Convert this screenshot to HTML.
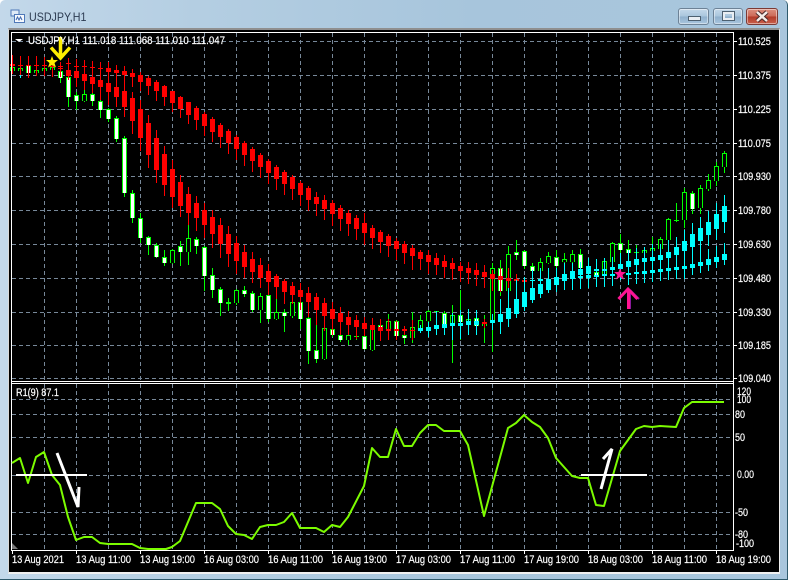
<!DOCTYPE html>
<html><head><meta charset="utf-8"><title>USDJPY,H1</title>
<style>
html,body{margin:0;padding:0;background:#fff;width:790px;height:581px;overflow:hidden}
#win{position:absolute;left:0;top:0;width:788px;height:580px;background:linear-gradient(90deg,#c3d8ea 0,#b4cee2 25%,#a7c5dc 60%,#a9c6dd 100%);border-right:1px solid #2f5a6c;border-bottom:1px solid #2f5a6c;border-radius:5px 5px 0 0;box-sizing:border-box}
#client{position:absolute;left:8px;top:28px;width:772px;height:546px;background:#000;border:1px solid;border-color:#8f8f8f #f0f0f0 #f0f0f0 #d8d8d8;border-top-width:2px;border-bottom-width:2px;box-sizing:border-box}
#t{position:absolute;left:29px;top:9px;font:12px "Liberation Sans",sans-serif;color:#2b3a50;line-height:16px;transform:scaleX(.89);transform-origin:0 0}
.b{position:absolute;top:8px;height:17px;box-sizing:border-box;border:1px solid #6d8296;border-radius:3px;box-shadow:inset 0 0 0 1px rgba(255,255,255,.45);background:linear-gradient(#c4d9ea 0,#aac6dd 48%,#8fb0cd 52%,#a9c6de 100%)}
#svg{position:absolute;left:0;top:0}
text{font-family:"Liberation Sans",sans-serif;fill:#fff;stroke:#fff;stroke-width:.2px;font-size:11px}
</style></head><body>
<div id="win">
<div id="t">USDJPY,H1</div>
<svg style="position:absolute;left:10px;top:9px" width="15" height="15" viewBox="0 0 15 15"><rect x="1" y="1" width="8" height="6" fill="#dfeaf6" stroke="#4f78b8"/><rect x="4.500" y="5.500" width="10" height="8" fill="#f6f9fd" stroke="#4f78b8"/><path d="M6 11l1.500-3 1.500 3 1.500-3 1.500 3" fill="none" stroke="#3f68b0"/></svg>
<div class="b" style="left:678px;width:31px"><div style="position:absolute;left:9px;top:7px;width:11px;height:3px;background:#e9eef3;border:1px solid #4d6070"></div></div>
<div class="b" style="left:713px;width:30px"><div style="position:absolute;left:9px;top:3px;width:7px;height:4px;border:2px solid #e9eef3;outline:1px solid #4d6070"></div></div>
<div class="b" style="left:746px;width:32px;border-color:#7c3a35;background:linear-gradient(#dc8f7f 0,#cc6a58 48%,#b23a28 52%,#c9604c 100%)"><svg width="30" height="15" style="position:absolute;left:0;top:0"><path d="M10 3l10 9M20 3l-10 9" stroke="#4a2a2a" stroke-width="4.500"/><path d="M10 3l10 9M20 3l-10 9" stroke="#f4ece8" stroke-width="2.500"/></svg></div>
<div id="client"></div>
</div>
<svg id="svg" width="790" height="581" viewBox="0 0 790 581">
<g stroke="#778899" stroke-width="1" stroke-dasharray="4 3" shape-rendering="crispEdges" fill="none">
<path d="M12 41.500H732M12 75.500H732M12 109.500H732M12 143.500H732M12 176.500H732M12 210.500H732M12 244.500H732M12 278.500H732M12 312.500H732M12 345.500H732M12 378.500H732"/>
<path d="M12 399.500H732M12 414.500H732M12 437.500H732M12 475.500H732M12 512.500H732M12 534.500H732"/>
<path d="M44.500 33V381M76.500 33V381M108.500 33V381M140.500 33V381M172.500 33V381M204.500 33V381M236.500 33V381M268.500 33V381M300.500 33V381M332.500 33V381M364.500 33V381M396.500 33V381M428.500 33V381M460.500 33V381M492.500 33V381M524.500 33V381M556.500 33V381M588.500 33V381M620.500 33V381M652.500 33V381M684.500 33V381M716.500 33V381"/>
<path d="M44.500 384V550M76.500 384V550M108.500 384V550M140.500 384V550M172.500 384V550M204.500 384V550M236.500 384V550M268.500 384V550M300.500 384V550M332.500 384V550M364.500 384V550M396.500 384V550M428.500 384V550M460.500 384V550M492.500 384V550M524.500 384V550M556.500 384V550M588.500 384V550M620.500 384V550M652.500 384V550M684.500 384V550M716.500 384V550"/>
</g>
<g id="c" shape-rendering="crispEdges"></g>
<g stroke="#fff" fill="none" shape-rendering="crispEdges" stroke-width="1">
<path d="M11.500 32.500H733.500V550.500H11.500ZM11.500 381.500H733.500M11.500 383.500H733.500"/>
<path d="M733 41.500h4M733 75.500h4M733 109.500h4M733 143.500h4M733 176.500h4M733 210.500h4M733 244.500h4M733 278.500h4M733 312.500h4M733 345.500h4M733 378.500h4"/>
<path d="M12.500 550v4M76.500 550v4M140.500 550v4M204.500 550v4M268.500 550v4M332.500 550v4M396.500 550v4M460.500 550v4M524.500 550v4M588.500 550v4M652.500 550v4M716.500 550v4"/>
</g>
<path d="M12 549v-6l6 6z" fill="#777"/>
<polyline fill="none" stroke="#7cfc00" stroke-width="2" stroke-linejoin="round" points="12,463 20,458 28,483 36,457 44,452 52,475 60,485 68,517 76,540 84,537 92,537 100,543 108,544 132,544 140,548 148,549 166,549 172,547 180,541 196,503 212,503 220,509 228,526 236,534 244,535 252,539 260,527 268,525 276,525 284,522 292,513 300,528 316,528 324,532 332,525 340,527 348,517 364,486 372,448 380,457 388,457 396,429 404,446 412,446 420,433 428,425 436,425 444,431 460,431 468,445 484,516 508,428 516,423 524,415 532,422 540,427 548,438 556,458 572,476 580,478 588,478 596,505 604,506 620,451 636,429 644,426 652,427 660,426 676,427 684,408 692,402 724,402"/>
<g fill="none" stroke="#fff">
<path d="M16 475H87M581 475H647" stroke-width="2"/>
<path d="M57 453L78 507 79 487" stroke-width="3"/>
<path d="M601 489L612 449 603 459" stroke-width="3"/>
</g>
<path d="M60.500 37V57M51 47.500L60.500 58 70 47.500" fill="none" stroke="#ffee00" stroke-width="3.500"/>
<polygon fill="#ffee00" points="52,56 53.500,60 58,60 54.500,63 56,67.500 52,65 48,67.500 49.500,63 46,60 50.500,60"/>
<polygon fill="#ff1493" points="620,268 621.500,272 626,272 622.500,275 624,279.500 620,277 616,279.500 617.500,275 614,272 618.500,272"/>
<path d="M630 290L639 299M630 292V309" fill="none" stroke="#8b1a9b" stroke-width="2"/>
<path d="M628.500 290V309M618.500 299L628 289 637.500 299" fill="none" stroke="#ff1493" stroke-width="3"/>
<path d="M15 39h8l-4 3z" fill="#fff"/>
<text x="28" y="44" textLength="197" lengthAdjust="spacingAndGlyphs">USDJPY,H1  111.018 111.068 111.010 111.047</text>
<text x="16" y="396" textLength="43" lengthAdjust="spacingAndGlyphs">R1(9) 87.1</text>
<g>
<text x="738" y="45" textLength="33" lengthAdjust="spacingAndGlyphs">110.525</text>
<text x="738" y="79" textLength="33" lengthAdjust="spacingAndGlyphs">110.375</text>
<text x="738" y="113" textLength="33" lengthAdjust="spacingAndGlyphs">110.225</text>
<text x="738" y="147" textLength="33" lengthAdjust="spacingAndGlyphs">110.075</text>
<text x="738" y="180" textLength="33" lengthAdjust="spacingAndGlyphs">109.930</text>
<text x="738" y="214" textLength="33" lengthAdjust="spacingAndGlyphs">109.780</text>
<text x="738" y="248" textLength="33" lengthAdjust="spacingAndGlyphs">109.630</text>
<text x="738" y="282" textLength="33" lengthAdjust="spacingAndGlyphs">109.480</text>
<text x="738" y="316" textLength="33" lengthAdjust="spacingAndGlyphs">109.330</text>
<text x="738" y="349" textLength="33" lengthAdjust="spacingAndGlyphs">109.185</text>
<text x="738" y="382" textLength="33" lengthAdjust="spacingAndGlyphs">109.040</text>
<text x="737" y="395" textLength="14" lengthAdjust="spacingAndGlyphs">120</text>
<text x="737" y="403" textLength="14" lengthAdjust="spacingAndGlyphs">100</text>
<text x="735" y="418" textLength="10" lengthAdjust="spacingAndGlyphs">80</text>
<text x="735" y="441" textLength="10" lengthAdjust="spacingAndGlyphs">50</text>
<text x="737" y="478" textLength="17" lengthAdjust="spacingAndGlyphs">0.00</text>
<text x="735" y="516" textLength="13" lengthAdjust="spacingAndGlyphs">-50</text>
<text x="735" y="538" textLength="13" lengthAdjust="spacingAndGlyphs">-80</text>
<text x="736" y="547" textLength="18" lengthAdjust="spacingAndGlyphs">-100</text>
</g>
<g>
<text x="12" y="563" textLength="52" lengthAdjust="spacingAndGlyphs">13 Aug 2021</text>
<text x="76" y="563" textLength="55" lengthAdjust="spacingAndGlyphs">13 Aug 11:00</text>
<text x="140" y="563" textLength="55" lengthAdjust="spacingAndGlyphs">13 Aug 19:00</text>
<text x="204" y="563" textLength="55" lengthAdjust="spacingAndGlyphs">16 Aug 03:00</text>
<text x="268" y="563" textLength="55" lengthAdjust="spacingAndGlyphs">16 Aug 11:00</text>
<text x="332" y="563" textLength="55" lengthAdjust="spacingAndGlyphs">16 Aug 19:00</text>
<text x="396" y="563" textLength="55" lengthAdjust="spacingAndGlyphs">17 Aug 03:00</text>
<text x="460" y="563" textLength="55" lengthAdjust="spacingAndGlyphs">17 Aug 11:00</text>
<text x="524" y="563" textLength="55" lengthAdjust="spacingAndGlyphs">17 Aug 19:00</text>
<text x="588" y="563" textLength="55" lengthAdjust="spacingAndGlyphs">18 Aug 03:00</text>
<text x="652" y="563" textLength="55" lengthAdjust="spacingAndGlyphs">18 Aug 11:00</text>
<text x="716" y="563" textLength="55" lengthAdjust="spacingAndGlyphs">18 Aug 19:00</text>
</g>
</svg>
<script>
var P="12,60,67,71,74,b;20,62,68,71,74,b;28,60,65,73,77,w;36,62,70,73,76,b;44,66,68,71,72,b;52,64,67,70,72,b;60,64,71,78,83,w;68,70,77,97,107,w;76,92,95,101,110,w;84,89,94,101,102,b;92,92,94,101,106,w;100,100,101,110,118,w;108,108,109,119,122,w;116,116,118,139,142,w;124,136,138,193,197,w;132,190,193,218,223,w;140,213,218,238,243,w;148,236,237,245,255,w;156,243,245,257,258,w;164,250,257,263,266,w;172,249,250,263,264,b;180,241,246,252,266,w;188,225,238,252,265,b;196,237,239,246,254,w;204,246,247,276,291,w;212,268,275,290,298,w;220,287,289,303,316,w;228,298,302,304,311,g;236,289,290,303,305,b;244,286,290,294,297,w;252,291,293,310,312,w;260,293,296,310,323,b;268,294,295,319,322,w;276,299,312,319,320,b;284,309,312,316,332,w;292,290,302,316,318,b;300,300,302,319,329,w;308,316,318,351,364,w;316,325,350,359,363,w;324,326,328,359,360,b;332,320,329,335,337,w;340,333,335,340,342,w;348,328,335,340,345,b;356,330,336,337,340,g;364,335,336,349,350,w;372,328,329,350,351,b;380,320,325,330,335,w;388,314,321,330,331,b;396,320,321,336,340,w;404,327,335,338,344,w;412,312,327,338,343,b;420,315,320,330,332,b;428,310,311,321,323,b;436,311,311,312,320,g;444,311,313,324,325,w;452,305,315,324,363,b;460,290,315,322,340,w;468,315,319,325,328,b;476,312,318,326,330,w;484,315,322,326,343,b;492,263,268,320,352,b;500,260,268,291,296,w;508,246,254,291,293,b;516,240,252,255,260,w;524,250,251,266,269,w;532,263,266,271,275,w;540,258,262,271,272,b;548,252,256,263,264,b;556,250,257,266,269,w;564,253,259,262,264,b;572,250,254,262,263,b;580,249,254,268,270,w;588,262,266,274,277,w;596,270,272,277,278,w;604,261,261,276,277,b;612,242,243,262,263,b;620,234,243,250,260,w;628,240,249,253,260,w;636,245,252,253,265,g;644,250,250,253,265,b;652,237,248,251,260,b;660,237,239,249,255,b;668,218,219,240,245,b;676,203,220,221,222,g;684,188,192,220,228,b;692,191,193,209,214,w;700,185,188,208,214,b;708,174,180,189,191,b;716,162,166,181,186,b;724,151,153,167,173,b";
var S="12,55,64,65,74;20,56,65,66,75;28,56,65,66,78;36,56,65,66,76;44,57,65,66,76;52,59,66,67,77;60,62,66,67,76;68,58,63,64,77;76,60,66,67,77;84,60,66,67,75;92,61,67,68,77;100,62,68,69,78;108,62,68,72,82;116,65,70,73,84;124,66,71,75,85;132,69,73,77,87;140,72,75,82,91;148,76,78,86,95;156,80,82,91,101;164,85,86,97,106;172,91,91,103,112;180,96,97,109,118;188,102,102,115,124;196,106,108,120,130;204,112,114,126,136;212,117,119,132,142;220,123,125,137,148;228,129,131,143,154;236,135,137,149,160;244,141,143,155,166;252,147,149,161,172;260,153,155,167,178;268,159,161,173,184;276,165,167,179,190;284,170,172,184,195;292,175,177,189,200;300,181,183,195,206;308,186,188,200,211;316,192,197,204,216;324,195,200,209,220;332,200,203,214,226;340,205,208,219,231;348,210,213,224,236;356,215,218,229,240;364,213,223,233,245;372,225,228,238,249;380,230,232,242,253;388,234,236,246,257;396,238,241,249,260;404,241,244,253,264;412,245,248,256,270;420,250,252,259,270;428,250,255,262,274;436,253,258,265,275;444,255,261,267,278;452,258,263,269,280;460,262,266,271,282;468,262,268,273,284;476,263,270,275,286;484,265,272,277,288;492,270,274,279,291;500,268,276,280,292;508,268,278,281,292;516,274,279,281,288;524,277,280,282,290";
var S2="532,270,280,281,295;540,268,279,281,295;548,268,279,281,293;556,268,278,280,292;564,267,277,279,290;572,267,277,278,288;580,266,276,278,288;588,265,275,278,287;596,265,275,277,287;604,264,274,276,286;612,264,274,276,285;628,263,273,275,285;636,262,272,274,284;644,261,271,274,283;652,260,270,273,282;660,259,269,272,281;668,258,268,271,280;676,257,267,270,279;684,255,266,269,279;692,253,264,268,275;700,251,262,266,273;708,249,259,265,271;716,246,257,262,268;724,243,254,260,265";
var F="12,56,65,66,74;20,57,65,66,75;28,57,65,66,76;36,57,65,66,76;44,58,65,66,76;52,60,66,67,77;60,63,68,69,77;68,58,70,76,80;76,59,71,78,87;84,60,74,81,90;92,62,77,84,93;100,63,80,87,100;108,71,83,92,105;116,78,87,97,107;124,85,91,107,117;132,92,98,121,134;140,100,109,138,151;148,115,123,155,168;156,130,138,170,183;164,146,154,185,196;172,160,169,197,208;180,175,182,206,217;188,187,194,213,225;196,196,203,218,231;204,203,210,225,238;212,210,217,234,248;220,218,225,244,258;228,226,234,254,267;236,236,243,261,274;244,245,252,267,278;252,252,259,272,283;260,258,265,278,288;268,264,271,282,295;276,274,276,287,299;284,279,281,292,304;292,282,286,295,304;300,283,290,297,310;308,287,293,302,317;316,293,297,310,325;324,298,303,316,331;332,302,309,319,335;340,307,313,322,335;348,311,317,325,335;356,315,320,327,339;364,317,323,329,336;372,318,325,330,340;380,319,327,331,341;388,319,329,331,340;396,321,329,331,340;404,326,329,331,335;412,320,330,331,340";
var F2="420,325,328,331,333;428,322,327,331,337;436,311,325,329,335;444,315,324,328,335;452,313,323,326,340;460,310,323,326,339;468,309,321,325,335;476,310,321,325,335;492,314,320,323,330;500,299,314,322,334;508,288,308,319,327;516,280,299,314,318;524,277,292,307,311;532,273,288,300,303;540,275,284,294,298;548,269,279,290,293;556,268,277,285,289;564,263,274,281,290;572,263,271,279,290;580,262,269,275,289;588,258,266,274,288;596,259,269,271,287;604,258,269,271,287;612,257,267,270,286;620,253,264,269,280;628,250,261,267,281;636,248,259,265,277;644,247,258,262,275;652,244,257,261,272;660,244,255,260,271;668,240,252,258,270;676,237,247,255,260;684,230,241,251,262;692,223,234,247,258;700,217,228,241,252;708,211,222,235,246;716,203,214,229,240;724,195,206,222,233";
var o="";
function r(x,y,w,h,c){o+='<rect x="'+x+'" y="'+y+'" width="'+w+'" height="'+Math.max(h,1)+'" fill="'+c+'"/>';}
function d(s,c){s.split(";").forEach(function(e){var a=e.split(",").map(Number);var x=a[0];r(x,a[1],1,a[4]-a[1],c);r(x-2,a[2],5,a[3]-a[2],c);});}
P.split(";").forEach(function(e){var a=e.split(","),x=+a[0],h=+a[1],t=+a[2],b=+a[3],l=+a[4],k=a[5];
r(x,h,1,l-h,"#00ff00");r(x-2,t,5,b-t,"#00ff00");
if(k!="g"&&b-t>2)r(x-1,t+1,3,b-t-1,k=="w"?"#ffffff":"#000000");});
r(20,72,1,6,"#00ffff");
d(S,"#ff0000");d(F,"#ff0000");d(S2,"#00ffff");d(F2,"#00ffff");
r(484,319,1,9,"#ff0000");r(482,322,5,2,"#ff0000");
document.getElementById("c").innerHTML=o;
</script>
</body></html>
